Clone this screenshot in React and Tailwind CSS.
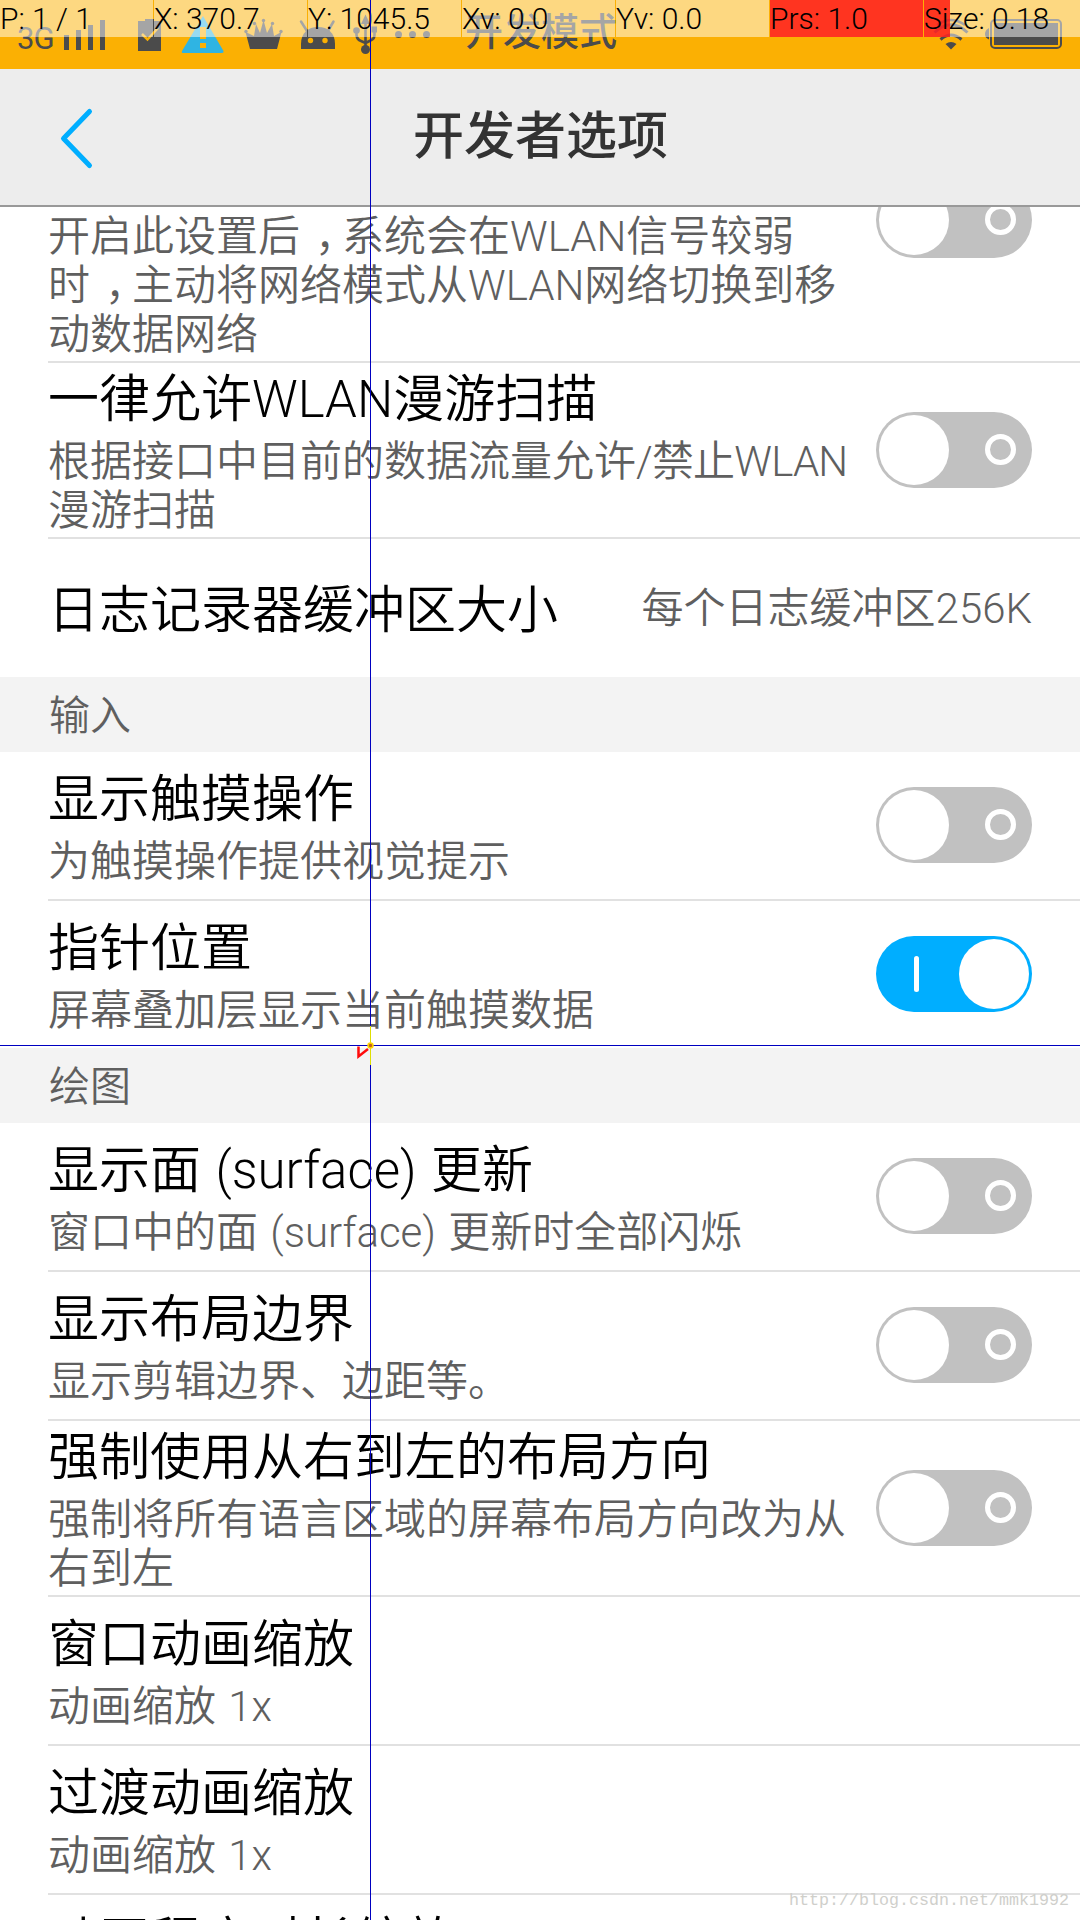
const CELLS = ["P: 1 / 1", "X: 370.7", "Y: 1045.5", "Xv: 0.0", "Yv: 0.0", "Prs: 1.0", "Size: 0.18"];

const Toggle = ({ on }) => (
    <span className={on ? "relative h-[76px] w-[156px] shrink-0 rounded-full bg-[#00aeff]" : "relative h-[76px] w-[156px] shrink-0 rounded-full bg-[#c1c1c1]"}>
        {on ? (
            <>
                <span className="absolute left-[38px] top-5 h-9 w-[5px] rounded-full bg-white"></span>
                <span className="absolute right-[3px] top-[3px] size-[70px] rounded-full bg-white"></span>
            </>
        ) : (
            <>
                <span className="absolute left-[3px] top-[3px] size-[70px] rounded-full bg-white"></span>
                <span className="absolute left-[109px] top-[22px] size-[31px] rounded-full border-[5px] border-white"></span>
            </>
        )}
    </span>
);

const Row = ({ title, lines, on, toggle, tall, last }) => (
    <div className="pl-12">
        <div className={(tall ? "h-[176px]" : last ? "h-[147px] pb-px" : "h-[149px] pb-px") + (last ? "" : " border-b-2 border-[#e1e1e1]") + " flex items-center justify-between pr-12"}>
            <div className="whitespace-nowrap pt-[5px] [word-spacing:2px]">
                <p className="mb-[7px] text-[51px] leading-[60px] text-black">{title}</p>
                {lines.map((line, i) => (
                    <p key={i} className="text-[42px] leading-[49px] text-[#5f5f5f]">{line}</p>
                ))}
            </div>
            {toggle && <Toggle on={on} />}
        </div>
    </div>
);

const Section = ({ children }) => (
    <div className="flex h-[75px] items-center bg-[#f3f3f3] pl-[49px] pt-[4px] text-[41px] text-[#5f5f5f]">{children}</div>
);

/* Coma de ancho completo centrada en su celda */
const Comma = () => <span className="-mr-[15px] pl-[15px]">，</span>;

const StatusIcons = () => (
    <svg className="absolute left-0 top-0" width="1080" height="69" viewBox="0 0 1080 69" fill="#4b4b4b">
        {/* Señal */}
        <path d="M64 35h5v15h-5zM76 30h5v20h-5zM88 25h5v25h-5zM100 20h5v30h-5z" />
        {/* Portapapeles */}
        <path d="M138 21h7v-2h9v2h7v30h-23z" />
        <path d="M142 34l5.5 5.5L158 28" fill="none" stroke="#fbb003" strokeWidth="2.5" />
        {/* Alerta */}
        <path d="M203 16L223.500 51Q224 53 222 53H183.500Q181 53 182 51z" fill="#2fb4e3" />
        <path d="M200 27h6v12h-6zM200 43h6v5h-6z" fill="#fbb003" />
        {/* Corona */}
        <path d="M250 49L245.500 32L254 36L256 24L260 33L263.500 20L267 33L272 24L274 36L281.500 32L277 49z" />
        <circle cx="246" cy="31.500" r="1.700" />
        <circle cx="254.500" cy="23.500" r="1.700" />
        <circle cx="263.500" cy="20.500" r="1.700" />
        <circle cx="272.500" cy="23.500" r="1.700" />
        <circle cx="281" cy="31.500" r="1.700" />
        {/* Android */}
        <path d="M301 49V44C301 33 308 27 318 27S335 33 335 44V49z" />
        <path d="M301 21.500L307 31M333.500 21.500L328 31" stroke="#4b4b4b" strokeWidth="2.500" strokeLinecap="round" />
        <circle cx="310.500" cy="40.500" r="2.700" fill="#fbb003" />
        <circle cx="325" cy="40.500" r="2.700" fill="#fbb003" />
        {/* USB */}
        <path d="M365.500 14.500L370 24H361z" />
        <circle cx="365.500" cy="49.500" r="4.500" />
        <circle cx="356.500" cy="30.500" r="3.300" />
        <path d="M371.500 26.500h5.500v6h-5.500z" />
        <path d="M365.500 22V48M356.500 31V35Q357 39.500 361 41L365.500 43L370.500 40.500Q374.500 39 374.500 35V31" fill="none" stroke="#4b4b4b" strokeWidth="2.600" />
        {/* Más */}
        <circle cx="398.500" cy="34.500" r="3.500" />
        <circle cx="412.500" cy="34.500" r="3.500" />
        <circle cx="426.500" cy="34.500" r="3.500" />
        {/* Wi-Fi */}
        <path d="M951 49.500L945.500 44Q951 40 956.500 44z" />
        <path d="M940.500 39.500Q951 30.500 961.500 39.500M934.500 32.500Q951 17 967.500 32.500" fill="none" stroke="#4b4b4b" strokeWidth="3" />
        <path d="M937 25Q951 15 965 25" fill="none" stroke="#4b4b4b" strokeWidth="2.500" />
        {/* Batería */}
        <path d="M989 28v11.500Q985 38 985 34T989 28z" />
        <rect x="991" y="20" width="70" height="28" rx="4" fill="none" stroke="#4b4b4b" strokeWidth="2" />
        <rect x="994" y="23" width="64" height="22" />
    </svg>
);

const PointerOverlay = () => (
    <div className="pointer-events-none absolute inset-0">
        <div className="flex h-[37px] gap-px font-[Roboto,sans-serif] font-light">
            {CELLS.map((cell, i) => (
                <div key={cell} className={(i === 6 ? "flex-1" : "w-[153px]") + (i === 5 ? " bg-[#ff3420]" : " bg-white/50") + " relative whitespace-nowrap text-[30px] leading-[38px] text-black"}>
                    {i === 6 && <span className="absolute left-0 top-0 h-full w-[26px] bg-[#ff0000]/75"></span>}
                    <span className="relative">{cell}</span>
                </div>
            ))}
        </div>
        <span className="absolute left-[370px] top-0 h-full w-px bg-[#0000c0]"></span>
        <span className="absolute left-0 top-[1045px] h-px w-full bg-[#0000c0]"></span>
        <svg className="absolute left-[350px] top-[1026px]" width="40" height="40" viewBox="0 0 40 40" fill="none">
            <path d="M8.500 20.500V30.500L18 23" stroke="#ff0a0a" strokeWidth="2.500" />
            <path d="M20.500 0V39" stroke="#dede00" strokeWidth="1" />
            <circle cx="20.500" cy="19.500" r="2.500" fill="#c06020" stroke="#ffd500" strokeWidth="1.500" />
        </svg>
    </div>
);

export default function App() {
    return (
        <div className="relative h-[1920px] w-[1080px] overflow-hidden bg-white font-[Roboto,'Noto_Sans_CJK_SC',sans-serif] font-[350]">
            {/* Barra de estado */}
            <div className="relative h-[69px] bg-[#fbb003] text-[#4b4b4b]">
                <StatusIcons />
                <span className="absolute left-[17px] top-[20px] text-[31px] font-normal leading-[38px] tracking-[-1px]">3G</span>
                <span className="absolute left-[465px] top-[7px] text-[38px] font-medium leading-[50px]">开发模式</span>
            </div>
            <header className="relative flex h-[138px] items-center justify-center border-b-2 border-[#999999] bg-[#ededed] pl-px pt-px">
                <svg className="absolute left-[58px] top-[36px]" width="40" height="66" viewBox="0 0 40 66" fill="none">
                    <path d="M31.500 6.500L5.500 33.500L31.500 60.500" stroke="#00aeff" strokeWidth="5" strokeLinecap="round" strokeLinejoin="round" />
                </svg>
                <h1 className="text-[51px] font-medium text-[#333333]">开发者选项</h1>
            </header>
            <div className="pl-12">
                <div className="flex h-[156px] items-end justify-between overflow-hidden whitespace-nowrap border-b-2 border-[#e1e1e1] pr-12 text-[42px] leading-[49px] text-[#5f5f5f]">
                    <div className="pb-[2px]">
                        <p>开启此设置后<Comma />系统会在WLAN信号较弱</p>
                        <p>时<Comma />主动将网络模式从WLAN网络切换到移</p>
                        <p>动数据网络</p>
                    </div>
                    <div className="mb-[103px] flex">
                        <Toggle />
                    </div>
                </div>
            </div>
            <Row tall toggle title="一律允许WLAN漫游扫描" lines={[<>根据接口中目前的数据流量允许<span className="tracking-[-0.8px]">/禁止WLAN</span></>, "漫游扫描"]} />
            <div className="flex h-[138px] items-center justify-between px-12">
                <p className="pt-[6px] text-[51px] text-black">日志记录器缓冲区大小</p>
                <p className="text-[42px] text-[#5f5f5f]">每个日志缓冲区256K</p>
            </div>
            <Section>输入</Section>
            <Row toggle title="显示触摸操作" lines={["为触摸操作提供视觉提示"]} />
            <Row toggle on last title="指针位置" lines={["屏幕叠加层显示当前触摸数据"]} />
            <Section>绘图</Section>
            <Row toggle title="显示面 (surface) 更新" lines={["窗口中的面 (surface) 更新时全部闪烁"]} />
            <Row toggle title="显示布局边界" lines={["显示剪辑边界、边距等。"]} />
            <Row tall toggle title="强制使用从右到左的布局方向" lines={["强制将所有语言区域的屏幕布局方向改为从", "右到左"]} />
            <Row title="窗口动画缩放" lines={["动画缩放 1x"]} />
            <Row title="过渡动画缩放" lines={["动画缩放 1x"]} />
            <p className="pl-12 pt-[17px] text-[51px] leading-[60px] text-black">动画程序时长缩放</p>
            <span className="absolute left-[789px] top-[1891px] font-['Liberation_Mono',monospace] text-[16.67px] leading-5 text-[#cfcfcb]">http://blog.csdn.net/mmk1992</span>
            <PointerOverlay />
        </div>
    );
}
